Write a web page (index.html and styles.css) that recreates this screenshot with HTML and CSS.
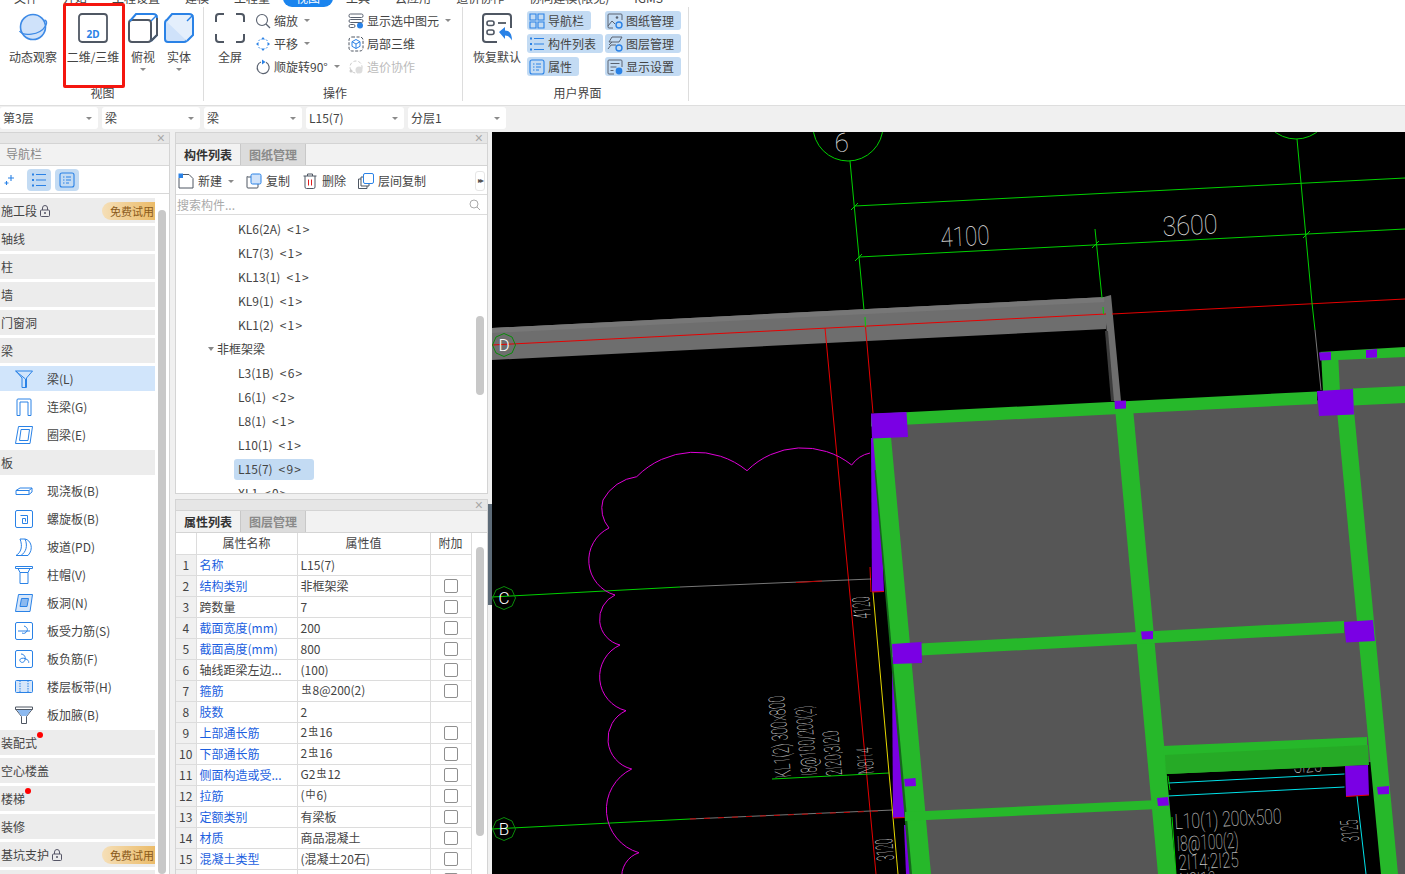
FILE: index.html
```html
<!DOCTYPE html>
<html lang="zh-CN">
<head>
<meta charset="utf-8">
<title>视图</title>
<link rel="stylesheet" href="styles.css">
</head>
<body>
<header class="header">
  <nav class="menubar">
    <span class="tab">文件</span><span class="tab">开始</span><span class="tab">工程设置</span><span class="tab">建模</span><span class="tab">工程量</span><span class="tab tab-active">视图</span><span class="tab">工具</span><span class="tab">云应用</span><span class="tab">造价协作</span><span class="tab">协同建模(限免)</span><span class="tab">IGMS</span>
  </nav>
  <div class="ribbon">
    <section class="group group-view">
      <div class="group-body">
        <div class="big w60">
          <svg class="big-icon" viewBox="0 0 30 30" width="30" height="30"><circle cx="15" cy="14" r="12.5" fill="#cfe2fa" stroke="#3d8ae6" stroke-width="1.6"/><path d="M1.5 18c3 5 20 5 26-5 2-4 1-5-1-6" fill="none" stroke="#3d8ae6" stroke-width="1.4"/></svg>
          <span>动态观察</span>
        </div>
        <div class="big w60">
          <svg class="big-icon" viewBox="0 0 30 30" width="30" height="30"><rect x="1" y="1" width="28" height="28" rx="3" fill="none" stroke="#4f5763" stroke-width="1.8"/><text x="15" y="25" text-anchor="middle" class="icon-2d">2D</text></svg>
          <span>二维/三维</span>
        </div>
        <div class="big w36 ml2">
          <svg class="big-icon" viewBox="0 0 30 30" width="30" height="30"><rect x="1" y="7" width="22" height="22" rx="3" fill="none" stroke="#4f5763" stroke-width="2"/><path d="M2 8l6-7h17q4 0 4 4v17l-6 6" fill="none" stroke="#2a82e6" stroke-width="2"/><path d="M23 8l6-6" stroke="#2a82e6" stroke-width="1.5"/><path d="M29 5v17l-6 6" fill="none" stroke="#4f5763" stroke-width="2"/></svg>
          <span>俯视</span><i class="caret caret-center"></i>
        </div>
        <div class="big w36">
          <svg class="big-icon" viewBox="0 0 30 30" width="30" height="30"><rect x="1" y="7" width="22" height="22" rx="3" fill="#cfe2fa" stroke="#2a82e6" stroke-width="2"/><path d="M2 8l6-7h17q4 0 4 4v17l-6 6" fill="#e4effc" stroke="#2a82e6" stroke-width="2"/><path d="M23 8l6-6" stroke="#2a82e6" stroke-width="1.5"/></svg>
          <span>实体</span><i class="caret caret-center"></i>
        </div>
      </div>
      <div class="group-label">视图</div>
    </section>

    <section class="group group-ops">
      <div class="group-body">
        <div class="big w40">
          <svg class="big-icon" viewBox="0 0 30 30" width="30" height="30"><path d="M1 9V4q0-3 3-3h5M21 1h5q3 0 3 3v5M29 21v5q0 3-3 3h-5M9 29H4q-3 0-3-3v-5" fill="none" stroke="#4f5763" stroke-width="2"/></svg>
          <span>全屏</span>
        </div>
        <div class="col col-a">
          <div class="row"><svg viewBox="0 0 16 16" width="16" height="16"><circle cx="7" cy="7" r="5.5" fill="none" stroke="#5a6270" stroke-width="1.1"/><path d="M11 11l4 4" stroke="#5a6270" stroke-width="1.2"/></svg><span>缩放</span><i class="caret"></i></div>
          <div class="row"><svg viewBox="0 0 16 16" width="16" height="16"><path d="M8 1l2 2.500H6zM8 15l2-2.500H6zM1 8l2.500-2v4zM15 8l-2.500-2v4z" fill="#2a82e6"/><path d="M5 3.500L3.500 5M11 3.500L12.500 5M5 12.500L3.500 11M11 12.500L12.500 11" stroke="#2a82e6" stroke-width=".9"/></svg><span>平移</span><i class="caret"></i></div>
          <div class="row"><svg viewBox="0 0 16 16" width="16" height="16"><path d="M6 3a6 6 0 1 0 5 .300" fill="none" stroke="#5a6270" stroke-width="1.2"/><path d="M7 .500v5l3.500-2.500z" fill="#2a82e6"/></svg><span>顺旋转90°</span><i class="caret"></i></div>
        </div>
        <div class="col col-b">
          <div class="row"><svg viewBox="0 0 16 16" width="16" height="16"><rect x="1" y="1" width="14" height="3.500" rx="1.500" fill="none" stroke="#5a6270"/><rect x="1" y="6.500" width="14" height="3" rx="1.500" fill="none" stroke="#5a6270"/><rect x="1" y="11.500" width="6" height="3" rx="1.500" fill="none" stroke="#5a6270"/><circle cx="12" cy="12.500" r="3" fill="#2a82e6"/></svg><span>显示选中图元</span><i class="caret"></i></div>
          <div class="row"><svg viewBox="0 0 16 16" width="16" height="16"><rect x="1" y="1" width="14" height="14" rx="3" fill="none" stroke="#4f5763" stroke-dasharray="3 1.500"/><path d="M8 3.500l4 2.200v4.600l-4 2.200-4-2.200V5.700zM4 5.700l4 2.300 4-2.300M8 8v4.500" fill="none" stroke="#2a82e6"/></svg><span>局部三维</span></div>
          <div class="row row-off"><svg viewBox="0 0 16 16" width="16" height="16"><circle cx="8" cy="8" r="6" fill="none" stroke="#ccc" stroke-dasharray="3 2"/><circle cx="11" cy="11" r="3.500" fill="#ddd"/><circle cx="3" cy="12" r="1.500" fill="#ccc"/></svg><span>造价协作</span></div>
        </div>
      </div>
      <div class="group-label">操作</div>
    </section>

    <section class="group group-ui">
      <div class="group-body">
        <div class="big w52">
          <svg class="big-icon" viewBox="0 0 30 30" width="30" height="30"><path d="M29 15V4q0-3-3-3H4Q1 1 1 4v22q0 3 3 3h11" fill="none" stroke="#4f5763" stroke-width="2"/><rect x="5" y="8" width="7" height="4.500" rx="2" fill="none" stroke="#4f5763" stroke-width="1.600"/><rect x="5" y="17" width="7" height="4.500" rx="2" fill="none" stroke="#4f5763" stroke-width="1.600"/><path d="M16 10h8" stroke="#4f5763" stroke-width="1.800"/><path d="M17 19l6-5v3.500c5 0 7 4 7 10-2-3.500-4-5-7-5V26z" fill="#2a82e6"/></svg>
          <span>恢复默认</span>
        </div>
        <div class="col col-ui1">
          <div class="row"><span class="uibtn"><svg viewBox="0 0 16 16" width="16" height="16"><path d="M1 1h6v6H1zM9 1h6v6H9zM1 9h6v6H1zM9 9h6v6H9z" fill="none" stroke="#2a82e6" stroke-width="1.100"/></svg>导航栏</span></div>
          <div class="row"><span class="uibtn"><svg viewBox="0 0 16 16" width="16" height="16"><path d="M5 2.500h10M5 8h10M5 13.500h10" stroke="#2a82e6" stroke-width="1.200"/><path d="M1 1.500h2v2H1zM1 7h2v2H1zM1 12.500h2v2H1z" fill="#2a82e6"/></svg>构件列表</span></div>
          <div class="row"><span class="uibtn"><svg viewBox="0 0 16 16" width="16" height="16"><rect x="1" y="1" width="14" height="14" rx="2" fill="none" stroke="#2a82e6" stroke-width="1.100"/><path d="M4 5h1.500M7 5h5M4 8h1.500M7 8h5M4 11h1.500M7 11h3" stroke="#2a82e6"/></svg>属性</span></div>
        </div>
        <div class="col col-ui2">
          <div class="row"><span class="uibtn"><svg viewBox="0 0 16 16" width="16" height="16"><path d="M6 15H2q-1 0-1-1V2q0-1 1-1h12q1 0 1 1v5" fill="none" stroke="#5a6270"/><path d="M1 13l4-5 3 3" fill="none" stroke="#5a6270"/><circle cx="10" cy="4.500" r="1.300" fill="#5a6270"/><circle cx="12" cy="12" r="3" fill="none" stroke="#2a82e6" stroke-width="1.400"/></svg>图纸管理</span></div>
          <div class="row"><span class="uibtn"><svg viewBox="0 0 16 16" width="16" height="16"><path d="M5 1h10l-3 5H2zM2 9l3-3M1 13l3-4h5" fill="none" stroke="#5a6270"/><circle cx="12" cy="12" r="3" fill="none" stroke="#2a82e6" stroke-width="1.400"/></svg>图层管理</span></div>
          <div class="row"><span class="uibtn"><svg viewBox="0 0 16 16" width="16" height="16"><path d="M7 15H2q-1 0-1-1V2q0-1 1-1h12q1 0 1 1v6" fill="none" stroke="#5a6270"/><path d="M3.500 4.500h9M3.500 8h6M3.500 11.500h3" stroke="#5a6270"/><circle cx="12" cy="12" r="3.400" fill="#2a82e6"/></svg>显示设置</span></div>
        </div>
      </div>
      <div class="group-label">用户界面</div>
    </section>
    <div class="annotation"></div>
  </div>
  <div class="selbar">
    <div class="select">第3层<i class="caret"></i></div>
    <div class="select">梁<i class="caret"></i></div>
    <div class="select">梁<i class="caret"></i></div>
    <div class="select">L15(7)<i class="caret"></i></div>
    <div class="select">分层1<i class="caret"></i></div>
  </div>
</header>

<main class="main">
  <aside class="panel nav">
    <div class="panel-head">×</div>
    <div class="nav-title">导航栏</div>
    <div class="nav-tools">
      <svg class="nav-plus" viewBox="0 0 12 12" width="12" height="12"><path d="M7 1v6M4 4h6M2.500 7v4M.500 9h4" stroke="#2a82e6" stroke-width="1.100"/></svg>
      <span class="tool-on"><svg viewBox="0 0 16 16" width="16" height="16"><path d="M5 2.500h10M5 8h10M5 13.500h10" stroke="#2a82e6" stroke-width="1.200"/><path d="M1 1.500h2v2H1zM1 7h2v2H1zM1 12.500h2v2H1z" fill="#2a82e6"/></svg></span>
      <span class="tool-on"><svg viewBox="0 0 16 16" width="16" height="16"><rect x="1" y="1" width="14" height="14" rx="2" fill="none" stroke="#2a82e6" stroke-width="1.100"/><path d="M4 5h1.500M7 5h5M4 8h1.500M7 8h5M4 11h1.500M7 11h3" stroke="#2a82e6"/></svg></span>
    </div>
    <div class="nav-body">
      <div class="nav-list">
        <div class="cat">施工段<svg class="lock" viewBox="0 0 10 12" width="10" height="12"><path d="M2.500 5V3a2.500 2.500 0 0 1 5 0v2" fill="none" stroke="#556"/><rect x=".5" y="5" width="9" height="6.500" rx="1" fill="none" stroke="#556"/><circle cx="5" cy="8" r="1" fill="#556"/></svg><span class="trial">免费试用</span></div>
        <div class="cat">轴线</div>
        <div class="cat">柱</div>
        <div class="cat">墙</div>
        <div class="cat">门窗洞</div>
        <div class="cat">梁</div>
        <div class="item item-on"><svg viewBox="0 0 18 18" width="18" height="18"><path d="M.5 1h17l-6 7v9.500h-1V9L.5 1zM1 1l6 7v9.500h4" fill="none" stroke="#2a82e6"/></svg><span>梁(L)</span></div>
        <div class="item"><svg viewBox="0 0 18 18" width="18" height="18"><path d="M2 17.500V2q0-1 1-1h12q1 0 1 1v15.500h-3V4H5v13.500z" fill="none" stroke="#2a82e6"/></svg><span>连梁(G)</span></div>
        <div class="item"><svg viewBox="0 0 18 18" width="18" height="18"><path d="M3.500 .5h14l-2.500 17H.5zM6 3.500h8.500L13 14.500H4.500z" fill="none" stroke="#2a82e6"/></svg><span>圈梁(E)</span></div>
        <div class="cat">板</div>
        <div class="item"><svg viewBox="0 0 18 18" width="18" height="18"><path d="M1 8.500h13l3-2.500H5zM1 8.500v4h13l3-2.500V6M14 8.500v4" fill="none" stroke="#2a82e6"/></svg><span>现浇板(B)</span></div>
        <div class="item"><svg viewBox="0 0 18 18" width="18" height="18"><rect x=".5" y=".5" width="17" height="17" rx="1.500" fill="none" stroke="#2a82e6"/><path d="M5.500 5.500h7v8h-5v-5h3v3" fill="none" stroke="#2a82e6"/></svg><span>螺旋板(B)</span></div>
        <div class="item"><svg viewBox="0 0 18 18" width="18" height="18"><path d="M1 17.500c5-3 7-9 4-16.500h5c3 7 1 13-4 16.500zM10 1c6 1 9 10 3 16.500H6" fill="none" stroke="#2a82e6"/></svg><span>坡道(PD)</span></div>
        <div class="item"><svg viewBox="0 0 18 18" width="18" height="18"><path d="M.5 .5h17v2H.5zM3 2.500l2 4h8l2-4M5 6.500V17.500h8V6.500" fill="none" stroke="#2a82e6"/></svg><span>柱帽(V)</span></div>
        <div class="item"><svg viewBox="0 0 18 18" width="18" height="18"><path d="M3.500 .5h14l-2.500 17H.5z" fill="#d6e6fa" stroke="#2a82e6"/><path d="M6.500 4.500h7l-1.500 8H5z" fill="#8cb9ef" stroke="#2a82e6"/></svg><span>板洞(N)</span></div>
        <div class="item"><svg viewBox="0 0 18 18" width="18" height="18"><rect x=".5" y=".5" width="17" height="17" rx="1.500" fill="none" stroke="#2a82e6"/><path d="M3 9h12M9 4c3 1 4 3 3 5s-3 3-5 2" fill="none" stroke="#2a82e6"/></svg><span>板受力筋(S)</span></div>
        <div class="item"><svg viewBox="0 0 18 18" width="18" height="18"><rect x=".5" y=".5" width="17" height="17" rx="1.500" fill="none" stroke="#2a82e6"/><path d="M6 4c3 0 5 3 4 6s-4 3-5 1 2-4 6-2 2 3 3 4" fill="none" stroke="#2a82e6"/></svg><span>板负筋(F)</span></div>
        <div class="item"><svg viewBox="0 0 18 18" width="18" height="18"><rect x=".5" y="2.500" width="17" height="12" rx="1" fill="#d6e6fa" stroke="#2a82e6"/><path d="M5 2.500v12M13 2.500v12" stroke="#2a82e6" stroke-dasharray="1.500 1"/></svg><span>楼层板带(H)</span></div>
        <div class="item"><svg viewBox="0 0 18 18" width="18" height="18"><path d="M.5 1h17v2.500H.5zM1 3.500l5.500 7V17.500h5V10.500l5.500-7" fill="none" stroke="#4f5763"/><path d="M2 4h14l-4.500 6h-5z" fill="#8cb9ef"/></svg><span>板加腋(B)</span></div>
        <div class="cat">装配式<i class="dot dot-a"></i></div>
        <div class="cat">空心楼盖</div>
        <div class="cat">楼梯<i class="dot dot-b"></i></div>
        <div class="cat">装修</div>
        <div class="cat">基坑支护<svg class="lock" viewBox="0 0 10 12" width="10" height="12"><path d="M2.500 5V3a2.500 2.500 0 0 1 5 0v2" fill="none" stroke="#556"/><rect x=".5" y="5" width="9" height="6.500" rx="1" fill="none" stroke="#556"/><circle cx="5" cy="8" r="1" fill="#556"/></svg><span class="trial">免费试用</span></div>
        <div class="cat"></div>
      </div>
      <div class="scroll scroll-nav"></div>
    </div>
  </aside>

  <div class="midcol">
    <section class="panel mid-top">
      <div class="panel-head">×</div>
      <div class="tabs"><span class="ptab ptab-on">构件列表</span><span class="ptab">图纸管理</span></div>
      <div class="acts">
        <span class="act"><svg viewBox="0 0 16 16" width="16" height="16"><path d="M5 1.500h6l4 4V15H1V5" fill="none" stroke="#4f5763"/><path d="M.5 .5h4.500v4.500H.5z" fill="#2a82e6"/></svg>新建<i class="caret"></i></span>
        <span class="act"><svg viewBox="0 0 16 16" width="16" height="16"><path d="M5 4H2q-1 0-1-1M1 4v10q0 1 1 1h9q1 0 1-1v-3" fill="none" stroke="#4f5763"/><rect x="5" y="1" width="10" height="10" rx="1.500" fill="#cfe2fa" stroke="#2a82e6"/></svg>复制</span>
        <span class="act"><svg viewBox="0 0 16 16" width="16" height="16"><path d="M1.500 3h13M5.500 3V1h5v2M3 3v11q0 1.500 1.500 1.500h7Q13 15.500 13 14V3" fill="none" stroke="#4f5763"/><path d="M6.500 6.500v6M9.500 6.500v6" stroke="#e02020"/></svg>删除</span>
        <span class="act"><svg viewBox="0 0 16 16" width="16" height="16"><path d="M5.500 4H3v9h8v-2" fill="none" stroke="#4f5763"/><path d="M3 6H.5v9.500H9V13" fill="none" stroke="#4f5763"/><rect x="5.500" y=".5" width="10" height="10" rx="1.500" fill="#fff" stroke="#2a82e6"/></svg>层间复制</span>
        <span class="more">▸▸</span>
      </div>
      <div class="search"><span>搜索构件...</span><svg viewBox="0 0 12 12" width="12" height="12"><circle cx="5" cy="5" r="4" fill="none" stroke="#aaa"/><path d="M8 8l3 3" stroke="#aaa"/></svg></div>
      <div class="tree-wrap">
        <div class="tree">
          <div class="node">KL6(2A)<span class="cnt">&lt;1&gt;</span></div>
          <div class="node">KL7(3)<span class="cnt">&lt;1&gt;</span></div>
          <div class="node">KL13(1)<span class="cnt">&lt;1&gt;</span></div>
          <div class="node">KL9(1)<span class="cnt">&lt;1&gt;</span></div>
          <div class="node">KL1(2)<span class="cnt">&lt;1&gt;</span></div>
          <div class="node node-group"><i class="caret"></i>非框架梁</div>
          <div class="node">L3(1B)<span class="cnt">&lt;6&gt;</span></div>
          <div class="node">L6(1)<span class="cnt">&lt;2&gt;</span></div>
          <div class="node">L8(1)<span class="cnt">&lt;1&gt;</span></div>
          <div class="node">L10(1)<span class="cnt">&lt;1&gt;</span></div>
          <div class="node"><span class="node-sel">L15(7)<span class="cnt">&lt;9&gt;</span></span></div>
          <div class="node">XL1<span class="cnt">&lt;0&gt;</span></div>
        </div>
        <div class="scroll scroll-tree"></div>
      </div>
    </section>

    <section class="panel mid-bot">
      <div class="panel-head">×</div>
      <div class="tabs"><span class="ptab ptab-on">属性列表</span><span class="ptab">图层管理</span></div>
      <div class="props-wrap">
        <table class="props">
          <colgroup><col class="c-num"><col class="c-name"><col class="c-val"><col class="c-add"></colgroup>
          <tr class="hd"><th></th><th>属性名称</th><th>属性值</th><th>附加</th></tr>
          <tr><td class="n">1</td><td class="k">名称</td><td>L15(7)</td><td></td></tr>
          <tr><td class="n">2</td><td class="k">结构类别</td><td>非框架梁</td><td><i class="cb"></i></td></tr>
          <tr><td class="n">3</td><td>跨数量</td><td>7</td><td><i class="cb"></i></td></tr>
          <tr><td class="n">4</td><td class="k">截面宽度(mm)</td><td>200</td><td><i class="cb"></i></td></tr>
          <tr><td class="n">5</td><td class="k">截面高度(mm)</td><td>800</td><td><i class="cb"></i></td></tr>
          <tr><td class="n">6</td><td>轴线距梁左边...</td><td>(100)</td><td><i class="cb"></i></td></tr>
          <tr><td class="n">7</td><td class="k">箍筋</td><td><span class="bar">虫</span>8@200(2)</td><td><i class="cb"></i></td></tr>
          <tr><td class="n">8</td><td class="k">肢数</td><td>2</td><td></td></tr>
          <tr><td class="n">9</td><td class="k">上部通长筋</td><td>2<span class="bar">虫</span>16</td><td><i class="cb"></i></td></tr>
          <tr><td class="n">10</td><td class="k">下部通长筋</td><td>2<span class="bar">虫</span>16</td><td><i class="cb"></i></td></tr>
          <tr><td class="n">11</td><td class="k">侧面构造或受...</td><td>G2<span class="bar">虫</span>12</td><td><i class="cb"></i></td></tr>
          <tr><td class="n">12</td><td class="k">拉筋</td><td>(<span class="bar">中</span>6)</td><td><i class="cb"></i></td></tr>
          <tr><td class="n">13</td><td class="k">定额类别</td><td>有梁板</td><td><i class="cb"></i></td></tr>
          <tr><td class="n">14</td><td class="k">材质</td><td>商品混凝土</td><td><i class="cb"></i></td></tr>
          <tr><td class="n">15</td><td class="k">混凝土类型</td><td>(混凝土20石)</td><td><i class="cb"></i></td></tr>
          <tr><td class="n"></td><td></td><td></td><td><i class="cb"></i></td></tr>
        </table>
        <div class="scroll scroll-props"></div>
      </div>
    </section>
  </div>

  <div class="splitter"><div class="handle"></div></div>

  <div class="canvas">
    <svg class="cad-svg" viewBox="492 132 913 742" width="913" height="742">
      <!-- slabs -->
      <polygon points="1336,358 1405,354 1405,392 1338,396" fill="#565656"/>
      <polygon points="880,422 1405,396 1405,874 925,874" fill="#565656"/>
      <!-- gray beam -->
      <polygon points="492,328 1106,297 1106,329 492,360" fill="#6e6e6e"/>
      <polygon points="492,328 1106,297 1106,302 492,333" fill="#777"/>
      <polygon points="1104,297 1111,295 1121,401 1112,401" fill="#6e6e6e"/>
      <polygon points="1105,331 1108,331 1114,401 1111,401" fill="#3c3c3c"/>
      <!-- window -->
      <polygon points="1165,772 1372,762 1397,874 1176,874" fill="#000"/>
      <!-- red axes -->
      <g class="l-red">
        <line x1="492" y1="345" x2="1106" y2="314"/>
        <line x1="1112" y1="314" x2="1405" y2="299"/>
        <line x1="865.500" y1="327" x2="873" y2="413"/>
        <line x1="825" y1="328" x2="876" y2="874"/>
        <line x1="870" y1="567" x2="871" y2="592"/>
      </g>
      <!-- green axes and dims -->
      <g class="l-green">
        <line x1="850" y1="161" x2="864" y2="310"/>
        <line x1="865" y1="317" x2="865.500" y2="327"/>
        <line x1="1095" y1="229" x2="1102" y2="298"/>
        <line x1="1103" y1="307" x2="1103.500" y2="314"/>
        <line x1="1297" y1="139" x2="1312" y2="303"/>
        <line x1="1312" y1="303" x2="1315" y2="330"/>
        <line x1="855" y1="206" x2="1405" y2="178"/>
        <line x1="859" y1="257" x2="1405" y2="229"/>
        <line x1="492" y1="597" x2="680" y2="587"/>
        <line x1="492" y1="829" x2="690" y2="819"/>
        <line x1="772" y1="779" x2="889" y2="773"/>
        <path d="M851 210l7-7M855 261l7-7M1092 248l7-7M1303 238l7-7"/>
        <circle cx="848" cy="126" r="35"/>
        <circle cx="1296" cy="104" r="35"/>
      </g>
      <g class="l-gray">
        <line x1="680" y1="587" x2="871" y2="579"/>
        <line x1="690" y1="819" x2="893" y2="810"/>
        <line x1="1315" y1="330" x2="1321" y2="390"/>
      </g>
      <g class="l-red-dash">
        <line x1="796" y1="582.500" x2="822" y2="581"/>
        <line x1="690" y1="819" x2="880" y2="811" stroke-dasharray="6 8"/>
      </g>
      <line class="l-yellow" x1="873" y1="592" x2="898" y2="874"/>
      <!-- cloud -->
      <path class="l-cloud" d="M870 453A30 30 0 0 0 851.700 465A79 79 0 0 0 747 470.700A82 82 0 0 0 636.700 476.700A45 45 0 0 0 603 500A30 30 0 0 0 609 528A36 36 0 0 0 615 595A26.600 26.600 0 0 0 620 645A35 35 0 0 0 626 710.700A31 31 0 0 0 631.700 769A45 45 0 0 0 639 852.700A25 25 0 0 0 622 880"/>
      <!-- axis bubbles -->
      <g class="bubble">
        <polygon points="504,333.500 512,337 515.500,345 512,353 504,356.500 496,353 492.500,345 496,337"/>
        <polygon points="504,586.500 512,590 515.500,598 512,606 504,609.500 496,606 492.500,598 496,590"/>
        <polygon points="504,817.500 512,821 515.500,829 512,837 504,840.500 496,837 492.500,829 496,821"/>
      </g>
      <text class="axis" x="504" y="351">D</text>
      <text class="axis" x="504" y="604">C</text>
      <text class="axis" x="504" y="835">B</text>
      <text class="cad" font-size="26" transform="rotate(-3 835 152)" x="835" y="152">6</text>
      <!-- dim text -->
      <text class="cad" font-size="27" textLength="49" lengthAdjust="spacingAndGlyphs" transform="rotate(-3 941 247)" x="941" y="247">4100</text>
      <text class="cad" font-size="27" textLength="55" lengthAdjust="spacingAndGlyphs" transform="rotate(-3 1163 236)" x="1163" y="236">3600</text>
      <text class="cad" font-size="22" textLength="82" lengthAdjust="spacingAndGlyphs" transform="rotate(-95 791 777)" x="791" y="777">KL1(2) 300x800</text>
      <text class="cad" font-size="22" textLength="70" lengthAdjust="spacingAndGlyphs" transform="rotate(-95 817 775)" x="817" y="775">I8@100/200(2)</text>
      <text class="cad" font-size="22" textLength="45" lengthAdjust="spacingAndGlyphs" transform="rotate(-95 842 775)" x="842" y="775">2I20;3I20</text>
      <text class="cad" font-size="22" textLength="26" lengthAdjust="spacingAndGlyphs" transform="rotate(-95 874 773)" x="874" y="773">N8I14</text>
      <text class="cad" font-size="24" textLength="22" lengthAdjust="spacingAndGlyphs" transform="rotate(-95 871 618)" x="871" y="618">4120</text>
      <text class="cad" font-size="24" textLength="22" lengthAdjust="spacingAndGlyphs" transform="rotate(-95 894 860)" x="894" y="860">3120</text>
      <text class="cad" font-size="24" textLength="22" lengthAdjust="spacingAndGlyphs" transform="rotate(-95 1359 841)" x="1359" y="841">3125</text>
      <text class="cad" font-size="20" textLength="28" lengthAdjust="spacingAndGlyphs" transform="rotate(-3 1294 773)" x="1294" y="773">3I25</text>
      <text class="cad" font-size="21" textLength="107" lengthAdjust="spacingAndGlyphs" transform="rotate(-3 1175 829)" x="1175" y="829">L10(1) 200x500</text>
      <text class="cad" font-size="21" textLength="62" lengthAdjust="spacingAndGlyphs" transform="rotate(-3 1177 851)" x="1177" y="851">I8@100(2)</text>
      <text class="cad" font-size="21" textLength="60" lengthAdjust="spacingAndGlyphs" transform="rotate(-3 1179 870)" x="1179" y="870">2I14;2I25</text>
      <text class="cad" font-size="21" textLength="36" lengthAdjust="spacingAndGlyphs" transform="rotate(-3 1180 888)" x="1180" y="888">N8I12</text>
      <!-- cyan and inner lines -->
      <g class="l-cyan">
        <line x1="1168.500" y1="783" x2="1344.500" y2="774"/>
        <line x1="1167.500" y1="796" x2="1344.500" y2="787"/>
        <line x1="1357" y1="796" x2="1366" y2="874"/>
      </g>
      <line class="l-green-s" x1="1168" y1="776" x2="1170" y2="790"/>
      <line class="l-green-s" x1="1172" y1="817" x2="1176" y2="874"/>
      <!-- purple strips under beams -->
      <polygon class="purple" points="871,438 878,438 884,592 872,592"/>
      <polygon class="purple" points="892,665 899,665 905,818 893,818"/>
      <polygon class="purple" points="904,825 908,825 912,874 906,874"/>
      <line class="l-red" x1="872" y1="592" x2="884" y2="591.500"/>
      <line class="l-red" x1="893" y1="818" x2="905" y2="817.500"/>
      <line class="l-darkg" x1="876" y1="470" x2="911" y2="874"/>
      <line class="l-darkg" x1="1373" y1="760" x2="1385" y2="874"/>
      <!-- green beams -->
      <g class="beam">
        <polygon points="871,414 1317,391.500 1317,404 871,426.500"/>
        <polygon points="1353,388.500 1405,386 1405,403 1353,405.500"/>
        <polygon points="872,426 890,426 931,874 912,874"/>
        <polygon points="1115,408 1133,408 1176,874 1158,874"/>
        <polygon points="1336,400 1353,400 1398,874 1381,874"/>
        <polygon points="1321,352 1338,352 1340,392 1323,392"/>
        <polygon points="1319,352 1405,347 1405,357 1338,360"/>
        <polygon points="892,645 1344,621 1344,633 892,657"/>
        <polygon points="1163,746 1367,737 1367,765 1166,774"/>
        <polygon points="905,812 1158,800 1158,809 905,821"/>
      </g>
      <polygon class="beam-dark" points="1165,755 1368,745 1369,765 1166,774"/>
      <!-- columns -->
      <g class="purple">
        <polygon points="871,413.500 906.500,412 908,437 872,438.500"/>
        <polygon points="1114.500,401 1126,400.500 1126,408.500 1115,409"/>
        <polygon points="1317,391 1353,389 1354,414.500 1319,416"/>
        <polygon points="1319,352.500 1331,352 1331,360 1320,360.500"/>
        <polygon points="1366,350 1377,349 1377,357.500 1366,358"/>
        <polygon points="892,644 921.500,642 922,663 893,664"/>
        <polygon points="1141,631.500 1153,631 1153,639 1142,639.500"/>
        <polygon points="1344,622 1373,620 1375,641 1346,642.500"/>
        <polygon points="1345,766 1368,765 1369,795 1346,796.500"/>
        <polygon points="1157,798 1168,797 1169,805.500 1158,806"/>
        <polygon points="1377,787 1389,786 1389,794 1378,794.500"/>
        <polygon points="904,779 915.500,778 916,786 905,786.500"/>
      </g>
      <line class="l-red" x1="1346" y1="796.500" x2="1369" y2="795"/>
    </svg>
  </div>
</main>
</body>
</html>
```

FILE: styles.css
```css
* { box-sizing: border-box; }
html, body { margin: 0; height: 874px; overflow: hidden; }
body {
  width: 1405px;
  background: #f0f0f0;
  color: #444;
  font: 12px/16px "Noto Sans CJK SC", "Noto Sans", sans-serif;
}
i { font-style: normal; }
svg { display: block; flex: none; }

/* header */
.header { position: relative; height: 132px; }
.menubar {
  height: 7px;
  overflow: hidden;
  display: flex;
  gap: 25px;
  padding-left: 14px;
  background: #fff;
}
.tab { height: 18px; line-height: 18px; margin-top: -11px; color: #444; }
.tab-active {
  margin: -11px -12px 0;
  padding: 0 13px;
  border-radius: 9px;
  background: #1a84ee;
  color: #fff;
}

.ribbon { position: relative; display: flex; height: 98px; background: #fff; }
.group { display: flex; flex-direction: column; height: 94px; border-right: 1px solid #ddd; }
.group-view { width: 204px; }
.group-ops { width: 259px; }
.group-ui { width: 226px; }
.group-body { display: flex; height: 78px; padding-top: 6px; }
.group-view .group-body { padding-left: 3px; }
.group-ops .group-body { padding-left: 6px; }
.group-ui .group-body { padding-left: 8px; }
.group-label { height: 16px; padding-left: 4px; line-height: 16px; text-align: center; color: #444; }
.group-view .group-label { padding-left: 2px; }

.big { display: flex; flex-direction: column; align-items: center; white-space: nowrap; }
.big-icon { margin-bottom: 6px; }
.w60 { width: 60px; }
.w36 { width: 36px; }
.w40 { width: 40px; }
.w52 { width: 52px; }
.ml2 { margin-left: 2px; }
.icon-2d { font: 700 10px "Noto Sans", sans-serif; fill: #2a82e6; text-anchor: middle; }

.caret {
  display: inline-block;
  width: 0; height: 0;
  margin-left: 6px;
  border: 3px solid transparent;
  border-top: 3.5px solid #8a8a8a;
  border-bottom: 0;
}
.caret-center { margin: 3px 0 0; }

.col { display: flex; flex-direction: column; margin-top: -4px; }
.col-a { margin-left: 5px; width: 93px; }
.col-b { width: 110px; }
.col-ui1 { margin-left: 4px; width: 78px; }
.row { display: flex; align-items: center; gap: 3px; height: 23px; white-space: nowrap; }
.row .caret { margin-left: 3px; }
.row-off { color: #bbb; }
.uibtn {
  display: inline-flex;
  align-items: center;
  gap: 3px;
  height: 19px;
  padding: 0 7px 0 2px;
  border-radius: 3px;
  background: #c3dbf3;
}
.annotation {
  position: absolute;
  left: 63px; top: -4px;
  width: 62px; height: 85px;
  border: 3px solid #f4160f;
  border-radius: 2px;
}

.selbar {
  display: flex;
  gap: 4px;
  height: 27px;
  padding-top: 1px;
  background: #f0f0f0;
  border-top: 1px solid #dedede;
}
.select {
  display: flex;
  align-items: center;
  justify-content: space-between;
  width: 98px;
  height: 22px;
  padding: 0 6px 0 3px;
  border-radius: 3px;
  background: #fff;
}

/* main */
.main { display: flex; height: 742px; }
.panel { overflow: hidden; background: #fff; border: 1px solid #d4d4d4; }
.panel-head {
  height: 11px;
  flex: none;
  padding-right: 4px;
  background: #e6e6e6;
  border-bottom: 1px solid #d4d4d4;
  color: #a8a8a8;
  font: 14px/10px "Liberation Sans", sans-serif;
  text-align: right;
}
.nav { display: flex; flex-direction: column; width: 170px; margin-right: 5px; border-width: 1px 1px 0 0; }
.nav-title {
  height: 22px;
  padding-left: 6px;
  line-height: 20px;
  background: #f2f2f2;
  border-bottom: 1px solid #d8d8d8;
  color: #888;
}
.nav-tools {
  display: flex;
  align-items: center;
  gap: 4px;
  height: 28px;
  padding-left: 4px;
  border-bottom: 1px solid #d8d8d8;
}
.nav-plus { margin-right: 7px; }
.tool-on {
  display: flex;
  align-items: center;
  justify-content: center;
  width: 24px; height: 22px;
  border-radius: 4px;
  background: #c3dbf3;
}
.nav-body { display: flex; flex: 1; min-height: 0; }
.nav-list { width: 155px; padding-top: 4px; }
.cat, .item { position: relative; display: flex; align-items: center; height: 25px; margin-bottom: 3px; white-space: nowrap; }
.cat { padding-left: 1px; background: #ececec; color: #444; }
.item { padding-left: 15px; }
.item svg { margin-right: 14px; }
.item-on { background: #d1e5fb; }
.lock { margin-left: 3px; }
.trial {
  margin-left: auto;
  width: 53px; height: 18px;
  padding-left: 8px;
  border-radius: 9px 0 0 9px;
  background: linear-gradient(90deg, #f5dfb8, #ebbb68);
  color: #8a5a1a;
  font-size: 11px;
  line-height: 18px;
}
.dot { position: absolute; width: 6px; height: 6px; border-radius: 50%; background: #f00; }
.dot-a { left: 37px; top: 2px; }
.dot-b { left: 25px; top: 2px; }
.scroll { flex: none; width: 8px; border-radius: 4px; background: #c8c8c8; }
.scroll-nav { margin: 16px 0 0 3px; }

.midcol { display: flex; flex-direction: column; gap: 5px; width: 313px; }
.mid-top { display: flex; flex-direction: column; height: 362px; }
.mid-bot { display: flex; flex-direction: column; flex: 1; min-height: 0; border-bottom: 0; }
.tabs { display: flex; height: 22px; flex: none; background: #f2f2f2; border-bottom: 1px solid #d4d4d4; }
.ptab {
  width: 65px;
  line-height: 21px;
  text-align: center;
  background: #dcdcdc;
  border-right: 1px solid #c8c8c8;
  color: #8a8a8a;
  font-weight: 700;
}
.ptab-on { background: #f2f2f2; color: #333; }

.acts { display: flex; align-items: center; gap: 12px; height: 29px; flex: none; padding: 2px 0 0 2px; border-bottom: 1px solid #dcdcdc; }
.act { display: flex; align-items: center; gap: 4px; white-space: nowrap; }
.act .caret { margin-left: 2px; }
.more {
  margin: 0 2px 0 auto;
  width: 10px; height: 20px;
  border: 1px solid #e6e6e6;
  border-radius: 3px;
  color: #555;
  font: 8px/18px "DejaVu Sans", sans-serif;
  text-align: center;
  letter-spacing: -2px;
}
.search {
  display: flex;
  align-items: center;
  justify-content: space-between;
  height: 20px;
  flex: none;
  padding: 0 6px 0 1px;
  border-bottom: 1px solid #dcdcdc;
  color: #aaa;
}
.tree-wrap { display: flex; flex: 1; min-height: 0; overflow: hidden; }
.tree { flex: 1; padding: 2px 0 0 62px; }
.node { display: flex; align-items: center; height: 24px; white-space: nowrap; color: #444; }
.cnt { margin-left: 6px; letter-spacing: 1.2px; }
.node-group { margin-left: -30px; }
.node-group .caret { margin: 0 3px 0 0; border-width: 4px 3.5px 0; border-top-color: #888; }
.node-sel { display: flex; align-items: center; width: 80px; height: 21px; margin-left: -4px; padding-left: 4px; border-radius: 3px; background: #c3dbf3; }
.scroll-tree { height: 79px; margin: 101px 3px 0 0; }

.props-wrap { display: flex; flex: 1; min-height: 0; overflow: hidden; }
.props { width: 295px; height: 0; table-layout: fixed; border-collapse: collapse; color: #444; }
.c-num { width: 20px; }
.c-name { width: 101px; }
.c-val { width: 133px; }
.c-add { width: 41px; }
.props th, .props td {
  height: 21px;
  padding: 0 3px;
  border: 1px solid #dcdcdc;
  font-weight: 400;
  white-space: nowrap;
  overflow: hidden;
}
.props tr:first-child th { border-top: 0; }
.props th:first-child, .props td:first-child { border-left: 0; }
.props .hd th { text-align: center; }
.props .n { padding: 0; background: #f0f0f0; text-align: center; }
.props .k { color: #1c5fe0; }
.bar { position: relative; top: -2px; font-size: 10px; margin: 0 1px; }
.cb { display: block; width: 14px; height: 14px; margin: 0 auto; border: 1px solid #8f8f8f; border-radius: 2px; }
.scroll-props { height: 289px; margin: 14px 0 0 4px; }

.splitter { width: 4px; padding-top: 372px; }
.handle { height: 101px; background: #5d6b78; }

.canvas { flex: 1; min-width: 0; background: #000; overflow: hidden; }
.cad-svg line, .cad-svg path, .cad-svg circle { fill: none; }
.l-red line, line.l-red { stroke: #e60000; stroke-width: 1; }
.l-red-dash line { stroke: #c00000; stroke-width: 1; }
.l-green line, .l-green path, .l-green circle { stroke: #00d000; stroke-width: 1; }
.l-gray line { stroke: #777; stroke-width: 1; }
.l-yellow { stroke: #e6d800; stroke-width: 1; }
.l-cloud { stroke: #e000d8; stroke-width: 1; }
.l-cyan line { stroke: #00e0e8; stroke-width: 1; }
.l-green-s { stroke: #00d000; stroke-width: 1; }
.l-darkg { stroke: #14691a; stroke-width: 3; }
.bubble polygon { fill: none; stroke: #0a8a0a; stroke-width: 1; }
.beam polygon { fill: #26b82a; }
.beam-dark { fill: #26aa26; }
.purple, .purple polygon { fill: #7a00e4; }
.axis { fill: #fff; font: 300 17px "Roboto", sans-serif; text-anchor: middle; }
.cad { fill: #e6e6e6; font-family: "Roboto", "Liberation Sans", sans-serif; font-weight: 100; }
```
